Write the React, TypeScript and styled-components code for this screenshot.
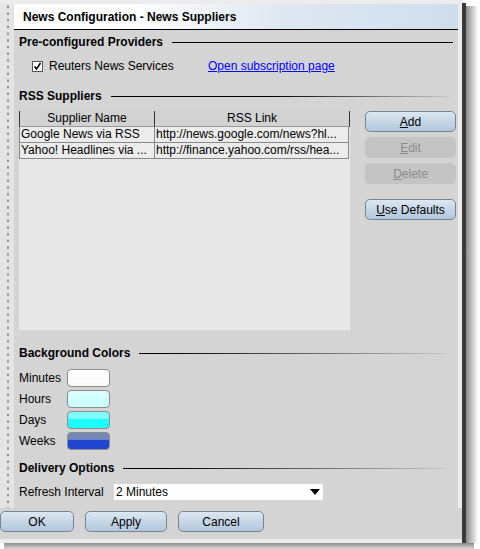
import React from 'react'
import styled, { createGlobalStyle, css } from 'styled-components'

const GlobalStyle = createGlobalStyle`
  html, body {
    margin: 0;
    padding: 0;
    background: #ffffff;
  }
  body {
    font-family: "Liberation Sans", Arial, sans-serif;
    font-size: 12px;
    color: #000;
  }
`

const suppliers = [
  { name: 'Google News via RSS', link: 'http://news.google.com/news?hl...' },
  { name: 'Yahoo! Headlines via ...', link: 'http://finance.yahoo.com/rss/hea...' }
]

const swatches = [
  { label: 'Minutes', top: '#ffffff', bottom: '#fbfbfb' },
  { label: 'Hours', top: '#d9ffff', bottom: '#ccffff' },
  { label: 'Days', top: '#7ffcfc', bottom: '#1ffcfc' },
  { label: 'Weeks', top: '#7388b8', bottom: '#2145d0' }
]

function Mnemonic ({ text }: { text: string }) {
  return <><u>{text[0]}</u>{text.slice(1)}</>
}

function CheckMark () {
  return (
    <svg width="11" height="11" viewBox="0 0 11 11">
      <rect x="0.5" y="0.5" width="10" height="10" fill="#ffffff" stroke="#555" />
      <path d="M2.5 5.5 L4.5 8 L8.5 2" fill="none" stroke="#000" strokeWidth="1.6" />
    </svg>
  )
}

export default function App () {
  return (
    <>
      <GlobalStyle />
      <Window>
        <MainColumn>
          <TopEdge />
          <Body>
            <DotStrip />
            <Content>
              <TitleBar>News Configuration - News Suppliers</TitleBar>
              <Panel>
                <SectionHeader $mt={4}>
                  <span>Pre-configured Providers</span>
                  <Rule $fade={100} />
                </SectionHeader>
                <CheckRow>
                  <CheckLabel>
                    <CheckMark />
                    Reuters News Services
                  </CheckLabel>
                  <Link href="#">Open subscription page</Link>
                </CheckRow>

                <SectionHeader $mt={14}>
                  <span>RSS Suppliers</span>
                  <Rule $fade={88} $end={4} />
                </SectionHeader>
                <TableRow>
                  <Table>
                    <HeaderCells>
                      <HeadCell $w={135}>Supplier Name</HeadCell>
                      <HeadCell $w={196}>RSS Link</HeadCell>
                    </HeaderCells>
                    {suppliers.map(s => (
                      <DataRow key={s.name}>
                        <Cell $w={135}>{s.name}</Cell>
                        <Cell $w={195}>{s.link}</Cell>
                      </DataRow>
                    ))}
                  </Table>
                  <SideButtons>
                    <Button $w={91}><Mnemonic text="Add" /></Button>
                    <Button $w={91} disabled><Mnemonic text="Edit" /></Button>
                    <Button $w={91} disabled><Mnemonic text="Delete" /></Button>
                    <Spacer />
                    <Button $w={91}><Mnemonic text="Use Defaults" /></Button>
                  </SideButtons>
                </TableRow>

                <SectionHeader $mt={15}>
                  <span>Background Colors</span>
                  <Rule $fade={50} $end={6} />
                </SectionHeader>
                <Swatches>
                  {swatches.map(s => (
                    <SwatchRow key={s.label}>
                      <SwatchLabel>{s.label}</SwatchLabel>
                      <Swatch $top={s.top} $bottom={s.bottom} />
                    </SwatchRow>
                  ))}
                </Swatches>

                <SectionHeader $mt={10}>
                  <span>Delivery Options</span>
                  <Rule $fade={55} $end={6} />
                </SectionHeader>
                <RefreshRow>
                  <RefreshLabel>Refresh Interval</RefreshLabel>
                  <Combo>
                    <span>2 Minutes</span>
                    <svg width="10" height="6" viewBox="0 0 10 6">
                      <path d="M0 0 H10 L5 6 Z" fill="#000" />
                    </svg>
                  </Combo>
                </RefreshRow>
              </Panel>
            </Content>
            <LightEdge />
          </Body>
          <Footer>
            <Button $w={74}>OK</Button>
            <Button $w={82}>Apply</Button>
            <Button $w={86}>Cancel</Button>
          </Footer>
          <BottomEdge />
        </MainColumn>
        <DarkBar />
        <SideShadow />
      </Window>
      <BottomShadow />
    </>
  )
}

const Window = styled.div`
  display: flex;
  width: 480px;
`

const MainColumn = styled.div`
  display: flex;
  flex-direction: column;
  width: 462px;
  background: #d4d4d4;
`

const TopEdge = styled.div`
  height: 4px;
  background: #ececec;
`

const Body = styled.div`
  display: flex;
`

const DotStrip = styled.div`
  width: 14px;
  background-color: #e4e4e4;
  background-image: radial-gradient(circle at 8px 3.5px, #8a8a8a 0.9px, transparent 1.4px);
  background-size: 14px 6.7px;
  background-position: 0 6px;
  background-repeat: repeat-y;
`

const Content = styled.div`
  width: 444px;
  display: flex;
  flex-direction: column;
`

const LightEdge = styled.div`
  width: 4px;
  background: #ececec;
`

const TitleBar = styled.div`
  height: 25px;
  line-height: 26px;
  padding-left: 9px;
  font-weight: bold;
  font-size: 12px;
  background: linear-gradient(to right, #ffffff 25%, #dfe8f2 60%, #cedded);
  border-bottom: 1px solid #000;
`

const Panel = styled.div`
  display: flex;
  flex-direction: column;
  padding: 0 5px 8px 5px;
`

const SectionHeader = styled.div<{ $mt: number }>`
  display: flex;
  align-items: center;
  gap: 9px;
  height: 16px;
  margin-top: ${p => p.$mt}px;
  font-weight: bold;
  font-size: 12px;
`

const Rule = styled.div<{ $fade: number, $end?: number }>`
  flex: 1;
  height: 1px;
  margin-right: ${p => p.$end ?? 0}px;
  background: linear-gradient(to right, #000 ${p => Math.max(p.$fade - 40, 10)}%, #c8c8c8 100%);
  ${p => p.$fade === 100 && css`background: #000;`}
`

const CheckRow = styled.div`
  display: flex;
  align-items: center;
  height: 16px;
  margin-top: 8px;
  padding-left: 13px;
`

const CheckLabel = styled.label`
  display: flex;
  align-items: center;
  gap: 6px;
  width: 176px;
  font-size: 12px;
`

const Link = styled.a`
  color: #0000ff;
  text-decoration: underline;
  font-size: 12px;
`

const TableRow = styled.div`
  display: flex;
  gap: 15px;
  margin-top: 7px;
`

const Table = styled.div`
  width: 331px;
  height: 219px;
  background: #e8e8e8;
  display: flex;
  flex-direction: column;
`

const HeaderCells = styled.div`
  display: flex;
  height: 16px;
  background: #d2d2d2;
`

const HeadCell = styled.div<{ $w: number }>`
  width: ${p => p.$w}px;
  box-sizing: border-box;
  text-align: center;
  line-height: 15px;
  border-left: 1px solid #333;
  border-bottom: 1px solid #999;
  &:last-child {
    border-right: 1px solid #333;
  }
`

const DataRow = styled.div`
  display: flex;
  height: 16px;
`

const Cell = styled.div<{ $w: number }>`
  width: ${p => p.$w}px;
  box-sizing: border-box;
  padding-left: 1px;
  line-height: 15px;
  white-space: nowrap;
  overflow: hidden;
  background: #ececec;
  border-left: 1px solid #888;
  border-bottom: 1px solid #888;
  &:last-child {
    border-right: 1px solid #888;
  }
`

const SideButtons = styled.div`
  display: flex;
  flex-direction: column;
  gap: 5px;
`

const Spacer = styled.div`
  height: 5px;
`

const Button = styled.button<{ $w: number }>`
  width: ${p => p.$w}px;
  height: 21px;
  padding: 0;
  box-sizing: border-box;
  font-family: "Liberation Sans", Arial, sans-serif;
  font-size: 12px;
  color: #000;
  border: 1px solid #7b8592;
  border-radius: 5px;
  background: linear-gradient(to bottom, #dde8f3 0%, #c6d6e6 50%, #b2c8dc 100%);
  &:disabled {
    color: #8a8a8a;
    border-color: #c4c4c4;
    background: #c4c4c4;
  }
`

const Swatches = styled.div`
  display: flex;
  flex-direction: column;
  gap: 2px;
  margin-top: 7px;
`

const SwatchRow = styled.div`
  display: flex;
  align-items: center;
  height: 19px;
`

const SwatchLabel = styled.span`
  width: 48px;
  font-size: 12px;
`

const Swatch = styled.div<{ $top: string, $bottom: string }>`
  width: 43px;
  height: 18px;
  box-sizing: border-box;
  border: 1px solid #8c8c8c;
  border-radius: 4px;
  background: linear-gradient(to bottom, ${p => p.$top} 0%, ${p => p.$top} 40%, ${p => p.$bottom} 45%, ${p => p.$bottom} 100%);
`

const RefreshRow = styled.div`
  display: flex;
  align-items: center;
  height: 16px;
  margin-top: 8px;
`

const RefreshLabel = styled.span`
  width: 95px;
`

const Combo = styled.div`
  width: 209px;
  height: 16px;
  box-sizing: border-box;
  padding: 0 3px 0 2px;
  background: #fdfdfd;
  display: flex;
  align-items: center;
  justify-content: space-between;
`

const Footer = styled.div`
  display: flex;
  gap: 11px;
  height: 28px;
  padding-top: 3px;
`

const BottomEdge = styled.div`
  height: 4px;
  background: #ececec;
`

const DarkBar = styled.div`
  width: 4px;
  margin-top: 3px;
  background: #3a3a3a;
`

const SideShadow = styled.div`
  width: 12px;
  margin-top: 6px;
  background: linear-gradient(to right, #8a8a8a, #ffffff);
`

const BottomShadow = styled.div`
  width: 470px;
  height: 9px;
  margin-left: 4px;
  background: linear-gradient(to bottom, #8a8a8a, #ffffff);
`
